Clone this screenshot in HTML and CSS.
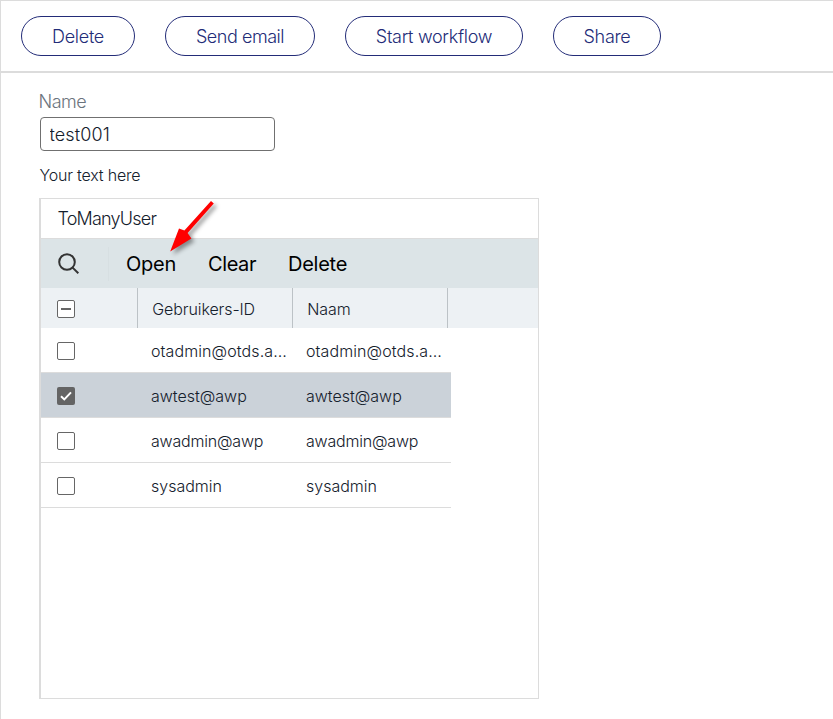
FILE: index.html
```html
<!DOCTYPE html>
<html lang="en">
<head>
<meta charset="utf-8">
<title>ToManyUser</title>
<link rel="stylesheet" href="styles.css">
</head>
<body>
<div class="page">
  <header class="actions">
    <button class="pill pill-delete">Delete</button>
    <button class="pill pill-email">Send email</button>
    <button class="pill pill-workflow">Start workflow</button>
    <button class="pill pill-share">Share</button>
  </header>
  <main class="form">
    <label class="label" for="name">Name</label>
    <input class="input" id="name" type="text" value="test001">
    <p class="note">Your text here</p>
    <section class="panel">
      <h2 class="panel-title">ToManyUser</h2>
      <div class="toolbar">
        <svg class="search" viewBox="0 0 24 24" width="24" height="24"><circle cx="10" cy="10" r="7.8"/><path d="M15.6 15.6 21.3 21.2"/></svg>
        <span class="divider"></span>
        <span class="tool tool-open">Open</span>
        <span class="tool tool-clear">Clear</span>
        <span class="tool tool-delete">Delete</span>
      </div>
      <div class="grid-head">
        <div class="cell-check"><span class="box box-some"></span></div>
        <div class="head">Gebruikers-ID</div>
        <div class="head">Naam</div>
        <div class="head head-rest"></div>
      </div>
      <div class="row"><div class="cell-check"><span class="box"></span></div><div class="cell cell-long">otadmin@otds.a…</div><div class="cell cell-long">otadmin@otds.a…</div></div>
      <div class="row selected"><div class="cell-check"><span class="box box-on"><svg viewBox="0 0 18 18" width="18" height="18"><path d="M4 9.2 7.3 12.4 14 5.4"/></svg></span></div><div class="cell">awtest@awp</div><div class="cell">awtest@awp</div></div>
      <div class="row"><div class="cell-check"><span class="box"></span></div><div class="cell cell-tight">awadmin@awp</div><div class="cell cell-tight">awadmin@awp</div></div>
      <div class="row"><div class="cell-check"><span class="box"></span></div><div class="cell">sysadmin</div><div class="cell">sysadmin</div></div>
    </section>
  </main>
  <svg class="arrow" viewBox="0 0 60 64" width="60" height="64"><path d="M51 10 53.8 12.4 27.6 42 31.4 47.6 10.2 60.4 19 37.4 24.4 39.6Z"/></svg>
</div>
</body>
</html>
```
FILE: styles.css
```css
* { box-sizing: border-box; }
body {
  margin: 0;
  background: #fff;
  color: #14202c;
  font-family: Inter, "Liberation Sans", sans-serif;
  font-weight: 340;
}
.page {
  position: relative;
  height: 719px;
  border-top: 1px solid #dcdcdc;
  border-left: 1px solid #dcdcdc;
  overflow: hidden;
}
.actions {
  display: flex;
  gap: 30px;
  height: 72px;
  padding: 15px 0 0 20px;
  border-bottom: 2px solid #dcdcdc;
}
.pill {
  height: 40px;
  padding: 0;
  border: 1px solid #232c78;
  border-radius: 20px;
  background: #fff;
  color: #232c78;
  font: inherit;
  font-size: 18px;
  letter-spacing: -0.3px;
}
.pill-delete { width: 114px; }
.pill-email { width: 150px; letter-spacing: -0.45px; }
.pill-workflow { width: 178px; }
.pill-share { width: 108px; }
.form { padding: 18px 0 0 38px; }
.label {
  display: block;
  height: 26px;
  margin-left: -0.5px;
  font-size: 18px;
  line-height: 22px;
  letter-spacing: -0.5px;
  color: #6b747d;
}
.input {
  display: block;
  width: 235px;
  height: 34px;
  margin-left: 1px;
  padding: 0 8.5px;
  border: 1px solid #707070;
  border-radius: 4px;
  color: inherit;
  font: inherit;
  font-size: 18px;
  letter-spacing: 0.1px;
}
.note {
  margin: 14px 0 13px;
  padding-left: 0.5px;
  font-size: 16px;
  line-height: 20px;
  letter-spacing: -0.2px;
}
.panel {
  width: 500px;
  height: 501px;
  border: 1px solid #dcdcdc;
  border-left-width: 2px;
}
.panel-title {
  height: 40px;
  margin: 0;
  padding-left: 16.5px;
  border-bottom: 1px solid #dcdcdc;
  font-size: 18px;
  font-weight: inherit;
  line-height: 39px;
  letter-spacing: -0.8px;
}
.toolbar {
  display: flex;
  align-items: center;
  height: 49px;
  padding-left: 16px;
  background: #dce4e7;
  color: #000;
  font-size: 20px;
  font-weight: 400;
  letter-spacing: -0.25px;
}
.search { fill: none; stroke: #333; stroke-width: 2; }
.divider { width: 1px; height: 34px; margin: 0 17px 0 27px; background: #d7dfe2; }
.tool-open { width: 82px; }
.tool-clear { width: 80px; letter-spacing: -0.4px; }
.grid-head {
  display: flex;
  height: 40px;
  background: #edf1f4;
}
.cell-check {
  display: flex;
  flex: none;
  align-items: center;
  width: 96px;
  padding: 2px 0 0 16px;
}
.box {
  display: block;
  width: 18px;
  height: 18px;
  border: 1px solid #666;
  border-radius: 2px;
  background: #fff;
}
.box-some { padding: 7px 3px; }
.box-some::before { content: ""; display: block; height: 2px; background: #666; }
.box-on { border: 0; background: #646464; }
.box-on svg { display: block; fill: none; stroke: #fff; stroke-width: 2; }
.head {
  flex: none;
  width: 155px;
  padding-left: 14.3px;
  border-left: 1px solid #bcc2c6;
  font-size: 16px;
  line-height: 42px;
  letter-spacing: -0.1px;
}
.head-rest { flex: 1; width: auto; }
.row {
  display: flex;
  width: 410px;
  height: 45px;
  border-bottom: 1px solid #dcdcdc;
}
.cell {
  width: 155px;
  padding-left: 14px;
  font-size: 16px;
  line-height: 46px;
  white-space: nowrap;
}
.cell-long { letter-spacing: 0.1px; }
.cell-tight { letter-spacing: -0.2px; }
.selected { background: #cbd2d9; }
.arrow {
  position: absolute;
  left: 159px;
  top: 190px;
  overflow: visible;
  fill: #f00;
  filter: drop-shadow(3px 3px 2px rgba(0, 0, 0, .4));
}
```
